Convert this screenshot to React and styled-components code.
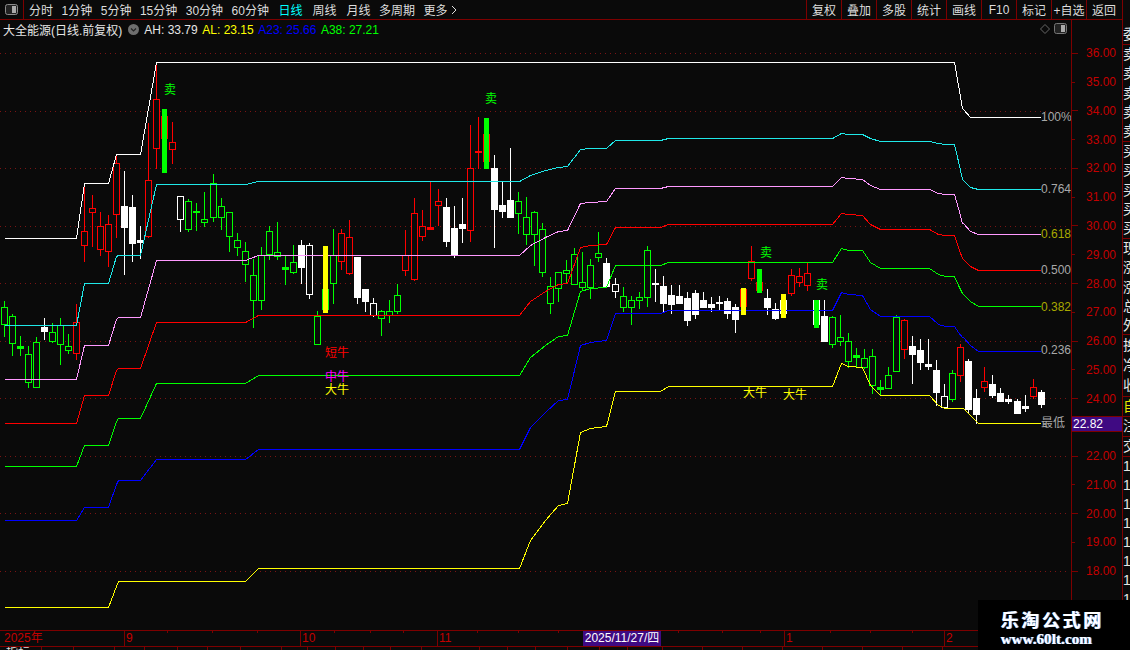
import React from 'react'
import styled, { createGlobalStyle } from 'styled-components'

const LINE = '#7d0000'
const BG = '#0a0a0a'
const FONT = '"Liberation Sans", "Noto Sans CJK SC", sans-serif'

const GlobalStyle = createGlobalStyle`
  html, body { margin: 0; padding: 0; background: ${BG}; }
  body { font-family: ${FONT}; font-size: 12px; }
`

// type, high, body top, body bottom, low. g/r = hollow, w = filled white, h = hollow white
const candles = [
  ['g',301,307,324,336],['g',314,316,343,355],['g',336,346,348,355],['g',346,354,382,387],['g',337,342,387,387],
  ['w',318,327,331,339],['g',323,332,341,342],['g',318,325,344,364],['g',334,346,350,353],['r',304,322,353,359],
  ['r',187,231,245,261],['r',195,208,212,246],['r',212,226,249,255],['r',215,224,251,266],['r',155,163,214,237],
  ['w',171,206,227,274],['w',195,207,243,261],['w',226,240,242,258],['r',123,180,236,237],['r',65,99,148,168],
  ['r',116,116,138,138],['r',122,142,149,163],['h',196,196,219,231],['g',199,201,229,231],['g',203,211,212,230],
  ['g',192,219,222,226],['g',174,183,217,221],['g',198,206,217,229],['g',212,212,236,251],['g',233,240,247,255],
  ['g',242,251,264,281],['g',259,275,300,327],['g',247,255,300,309],['g',226,231,254,259],['g',222,252,256,259],
  ['g',255,267,269,284],['g',245,262,272,273],['w',240,245,267,283],['h',243,245,294,298],['g',311,316,344,344],
  ['g',289,289,309,309],['g',229,255,283,303],['r',229,233,261,269],['r',220,237,273,274],['w',257,257,297,303],
  ['w',289,289,301,311],['h',298,303,315,316],['g',310,311,318,335],['g',300,311,315,322],['g',284,295,311,313],
  ['r',230,255,270,275],['r',198,213,279,280],['r',210,226,236,240],['r',181,227,229,229],['r',189,201,205,225],
  ['w',198,207,241,246],['w',206,228,255,257],['w',198,224,228,242],['r',125,168,230,241],['r',117,151,152,168],
  ['r',134,134,161,161],['w',155,168,209,247],['w',181,205,211,217],['w',148,200,217,217],['g',192,201,213,233],
  ['g',197,217,234,244],['g',211,212,234,265],['g',223,229,272,276],['g',277,286,303,313],['g',272,272,288,301],
  ['g',260,270,273,283],['g',248,254,284,284],['g',252,282,287,289],['g',259,265,287,298],['g',232,253,257,261],
  ['w',258,263,286,287],['h',278,284,291,297],['g',287,296,307,311],['g',296,300,307,324],['g',292,297,300,308],
  ['g',246,250,297,306],['w',269,283,284,301],['w',276,286,303,311],['w',285,295,304,313],['w',285,296,303,303],
  ['w',292,298,320,325],['w',290,293,314,318],['w',292,300,307,307],['w',297,304,307,311],['w',296,302,303,309],
  ['w',298,301,313,318],['w',304,307,319,332],['r',289,289,306,306],['r',246,261,278,280],['r',282,282,290,290],
  ['w',289,298,307,314],['w',303,309,318,319],['w',300,300,313,313],['r',269,275,293,295],['r',268,276,282,286],
  ['r',263,273,285,290],['w',300,300,324,324],['w',300,316,341,341],['g',316,317,344,347],['g',315,337,341,345],
  ['g',333,341,361,367],['g',348,355,357,367],['g',349,358,367,368],['g',349,356,385,393],['g',380,387,389,395],
  ['g',367,375,388,388],['g',315,317,371,371],['r',319,320,349,358],['w',336,346,354,383],['w',339,350,362,369],
  ['w',339,364,366,369],['w',360,370,392,405],['h',384,396,407,407],['g',370,373,399,401],['r',344,347,375,381],
  ['w',359,361,409,413],['w',389,398,414,423],['r',367,381,387,391],['w',375,384,395,397],['w',388,393,401,401],
  ['w',395,399,401,403],['w',399,401,413,413],['w',395,406,408,411],['r',379,387,396,398],['w',390,392,404,407],
]

// signal bars that sit over the candle at index k
const signals = [
  { k: 20, top: 109, bottom: 173, color: '#00ff00' },
  { k: 40, top: 246, bottom: 313, color: '#ffff00' },
  { k: 60, top: 118, bottom: 169, color: '#00ff00' },
  { k: 92, top: 288, bottom: 315, color: '#ffff00' },
  { k: 94, top: 269, bottom: 293, color: '#00ff00' },
  { k: 97, top: 294, bottom: 318, color: '#ffff00' },
  { k: 101, top: 300, bottom: 328, color: '#00ff00' },
]

const high = [[4,238],[76,238],[84,183],[108,183],[116,154],[140,154],[156,62],[954,62],[958,85],[962,108],[970,117],[1040,117]]
const low = [[4,607],[108,607],[118,581],[245,581],[258,568],[519,568],[530,540],[545,520],[558,505],[567,503],[580,432],[590,428],[606,426],[615,391],[660,391],[668,386],[832,386],[841,363],[848,366],[862,367],[870,385],[880,395],[929,395],[938,405],[945,408],[963,408],[978,423],[1040,423]]

const levels = [
  { f: 1, color: '#ffffff' },
  { f: 0.764, color: '#1fe8e8' },
  { f: 0.618, color: '#ff99ff' },
  { f: 0.5, color: '#ff0000' },
  { f: 0.382, color: '#00ff00' },
  { f: 0.236, color: '#0000ff' },
  { f: 0, color: '#ffff00' },
]

const levelLabels = [
  { text: '100%', y: 117, color: '#a8a8a8' },
  { text: '0.764', y: 189, color: '#a8a8a8' },
  { text: '0.618', y: 234, color: '#a8a800' },
  { text: '0.500', y: 270, color: '#a8a8a8' },
  { text: '0.382', y: 307, color: '#a8a800' },
  { text: '0.236', y: 350, color: '#a8a8a8' },
  { text: '最低', y: 423, color: '#a8a8a8' },
]

const marks = [
  { text: '卖', x: 170, y: 90, color: '#00ff00' },
  { text: '卖', x: 491, y: 99, color: '#00ff00' },
  { text: '卖', x: 766, y: 253, color: '#00ff00' },
  { text: '卖', x: 822, y: 285, color: '#00ff00' },
  { text: '短牛', x: 337, y: 353, color: '#ff0000' },
  { text: '中牛', x: 337, y: 377, color: '#ff00ff' },
  { text: '大牛', x: 337, y: 390, color: '#ffff00' },
  { text: '大牛', x: 755, y: 393, color: '#ffff00' },
  { text: '大牛', x: 795, y: 395, color: '#ffff00' },
]

const candleColor = { g: '#00ff00', r: '#ff0000', w: '#ffffff', h: '#ffffff' }
const candleX = (k) => Math.floor(4 + 8.04 * k)

const interp = (pts, x) => {
  for (let i = 1; i < pts.length; i++) {
    if (x <= pts[i][0]) {
      const [x0, y0] = pts[i - 1]
      const [x1, y1] = pts[i]
      return y0 + ((x - x0) / (x1 - x0)) * (y1 - y0)
    }
  }
  return pts[pts.length - 1][1]
}

const xs = [...new Set([...high, ...low].map((p) => p[0]))].sort((a, b) => a - b)
const levelPoints = (f) =>
  xs
    .map((x) => {
      const h = interp(high, x)
      const l = interp(low, x)
      return `${x + 0.5},${Math.round(l + f * (h - l)) + 0.5}`
    })
    .join(' ')

const priceToY = (p) => 53.5 + (36 - p) * 28.78
const grid = [36, 34, 32, 30, 28, 26, 24, 22, 20, 18]
const prices = Array.from({ length: 19 }, (_, i) => 36 - i)

const Page = styled.div`
  display: flex;
  position: relative;
  width: 1130px;
  height: 650px;
  overflow: hidden;
  background: ${BG};
  color: #ddd;
`
const Left = styled.div`
  display: flex;
  flex-direction: column;
  width: 1122px;
`
const Toolbar = styled.div`
  display: flex;
  justify-content: space-between;
  height: 19px;
  border-bottom: 1px solid ${LINE};
  flex-shrink: 0;
`
const Tabs = styled.div`
  display: flex;
  align-items: center;
  gap: 8.5px;
`
const PanelToggle = styled.div`
  display: flex;
  align-items: center;
  justify-content: center;
  width: 23px;
  height: 19px;
  margin-right: -3.5px;
  border-right: 1px solid ${LINE};
`
const Tab = styled.span`
  display: flex;
  align-items: center;
  gap: 3px;
  margin-left: ${(p) => p.$extra || 0}px;
  color: ${(p) => (p.$active ? '#00ffff' : '#ddd')};
  white-space: nowrap;
`
const ToolButtons = styled.div`
  display: flex;
  margin-right: 1px;
`
const ToolButton = styled.div`
  display: flex;
  align-items: center;
  justify-content: center;
  width: 35px;
  border-left: 1px solid ${LINE};
  box-sizing: border-box;
  color: #ddd;
  white-space: nowrap;
`
const Main = styled.div`
  display: flex;
  height: 610px;
  flex-shrink: 0;
`
const ChartPane = styled.div`
  position: relative;
  width: 1071px;
  height: 610px;
  border-right: 1px solid ${LINE};
  flex-shrink: 0;
`
const ChartSvg = styled.svg`
  display: block;
`
const InfoBar = styled.div`
  position: absolute;
  top: 2px;
  left: 3px;
  display: flex;
  align-items: center;
  height: 15px;
  white-space: nowrap;
`
const StockName = styled.span`
  color: #e6e6e6;
  margin-right: 6px;
`
const InfoIcon = styled.svg`
  margin-right: 5px;
`
const Metric = styled.span`
  color: ${(p) => p.$color};
  margin-right: 4.6px;
`
const PaneIcons = styled.div`
  position: absolute;
  top: 3px;
  right: 4px;
  display: flex;
  align-items: center;
  gap: 4px;
`
const Mark = styled.text`
  font-family: ${FONT};
  font-size: 12px;
  text-anchor: ${(p) => p.$anchor || 'middle'};
  dominant-baseline: central;
  fill: ${(p) => p.$color};
`
const PriceAxis = styled.div`
  position: relative;
  flex: 1;
  padding-top: 19px;
  box-sizing: border-box;
  overflow: hidden;
`
const PriceRow = styled.div`
  display: flex;
  align-items: center;
  height: 28.78px;
  color: #c40000;
  font-size: 12px;
`
const PriceTick = styled.i`
  display: block;
  width: ${(p) => (p.$major ? 6 : 3)}px;
  height: 1px;
  margin-right: ${(p) => (p.$major ? 8 : 11)}px;
  background: ${LINE};
`
const PriceTag = styled.div`
  position: absolute;
  left: 0;
  right: 0;
  top: 396px;
  height: 16px;
  padding-left: 1px;
  border-top: 1px solid ${LINE};
  border-bottom: 1px solid ${LINE};
  box-sizing: border-box;
  background: #3f0a82;
  color: #fff;
  font-size: 12px;
  line-height: 14px;
`
const DateAxis = styled.div`
  position: relative;
  display: flex;
  height: 15px;
  border-top: 1px solid ${LINE};
  border-bottom: 1px solid ${LINE};
  flex-shrink: 0;
`
const DateCell = styled.div`
  width: ${(p) => p.$w}px;
  padding-left: ${(p) => (p.$first ? 4 : 1)}px;
  border-left: ${(p) => (p.$first ? 'none' : `1px solid ${LINE}`)};
  box-sizing: border-box;
  color: #c40000;
  line-height: 15px;
  white-space: nowrap;
`
const DateTick = styled.i`
  position: absolute;
  top: 0;
  width: 1px;
  height: 2px;
  background: ${LINE};
`
const DateTag = styled.div`
  position: absolute;
  top: 0;
  left: 583px;
  width: 78px;
  height: 15px;
  background: #3f0a82;
  color: #fff;
  line-height: 15px;
  text-align: center;
  white-space: nowrap;
`
const BottomStrip = styled.div`
  display: flex;
  flex: 1;
  overflow: hidden;
`
const StripCell = styled.div`
  width: ${(p) => p.$w}px;
  border-right: 1px solid ${LINE};
  box-sizing: border-box;
  color: #ddd;
  line-height: 12px;
  padding-left: 6px;
  white-space: nowrap;
  overflow: hidden;
`
const Side = styled.div`
  display: flex;
  flex-direction: column;
  width: 8px;
  border-left: 1px solid ${LINE};
  box-sizing: border-box;
  overflow: hidden;
`
const SideGroup = styled.div`
  height: ${(p) => p.$h}px;
  border-bottom: ${(p) => (p.$plain ? 'none' : `1px solid ${LINE}`)};
  box-sizing: border-box;
  flex-shrink: 0;
`
const SideRow = styled.div`
  height: ${(p) => p.$row || 19.3}px;
  line-height: ${(p) => p.$row || 19.3}px;
  font-size: 14px;
  color: ${(p) => p.$color || '#e6e6e6'};
  white-space: nowrap;
`
const Watermark = styled.div`
  position: absolute;
  right: 0;
  bottom: 0;
  width: 152px;
  height: 50px;
  background: #000;
  text-align: center;
  font-weight: bold;
  color: #fff;
`
const WatermarkTitle = styled.div`
  margin-top: 8px;
  padding-right: 4px;
  height: 22px;
  font-family: "Noto Sans CJK SC", sans-serif;
  font-size: 18px;
  line-height: 22px;
  letter-spacing: 2.6px;
  text-shadow: 1px 0 #7fb4ff;
`
const WatermarkUrl = styled.div`
  margin-top: 1px;
  padding-right: 16px;
  font-family: "Liberation Serif", serif;
  font-size: 15px;
  line-height: 17px;
  letter-spacing: 0.1px;
  text-shadow: 1px 0 #7fb4ff;
`

const Candle = ({ k, data }) => {
  const [type, hi, top, bot, lo] = data
  const x = candleX(k)
  const color = candleColor[type]
  const flat = bot - top <= 2
  const filled = type === 'w' || flat
  return (
    <g>
      <line x1={x + 0.5} x2={x + 0.5} y1={hi} y2={lo + 1} stroke={color} />
      {filled ? (
        <rect x={x - 3} y={top} width={7} height={bot - top + 1} fill={color} />
      ) : (
        <rect x={x - 2.5} y={top + 0.5} width={6} height={bot - top} fill={BG} stroke={color} />
      )}
    </g>
  )
}

const Chart = () => (
  <ChartSvg width="1071" height="610" viewBox="0 20 1071 610" shapeRendering="crispEdges">
    {grid.map((p) => (
      <line
        key={p}
        x1="0"
        x2="1068"
        y1={Math.floor(priceToY(p)) + 0.5}
        y2={Math.floor(priceToY(p)) + 0.5}
        stroke="#7a1414"
        strokeDasharray="1 4"
      />
    ))}
    {candles.map((c, k) => (
      <Candle key={k} k={k} data={c} />
    ))}
    {levels.map((l) => (
      <polyline key={l.f} points={levelPoints(l.f)} fill="none" stroke={l.color} />
    ))}
    {signals.map((s) => (
      <rect key={s.k} x={candleX(s.k) - 2} y={s.top} width={5} height={s.bottom - s.top} fill={s.color} />
    ))}
    {marks.map((m, i) => (
      <Mark key={i} x={m.x} y={m.y} $color={m.color}>
        {m.text}
      </Mark>
    ))}
    {levelLabels.map((l) => (
      <Mark key={l.text} x={1041} y={l.y} $color={l.color} $anchor="start">
        {l.text}
      </Mark>
    ))}
  </ChartSvg>
)

const ToggleIcon = ({ stroke = '#8c8c8c' }) => (
  <svg width="13" height="11" viewBox="0 0 13 11">
    <rect x="0.5" y="0.5" width="12" height="10" rx="2" fill="#222" stroke={stroke} />
    <rect x="7" y="2" width="4" height="7" fill="#aaa" />
  </svg>
)

const tabs = [
  { label: '分时' },
  { label: '1分钟' },
  { label: '5分钟' },
  { label: '15分钟' },
  { label: '30分钟' },
  { label: '60分钟' },
  { label: '日线', extra: 1, active: true },
  { label: '周线', extra: 1.5 },
  { label: '月线', extra: 1.5 },
  { label: '多周期' },
]
const tools = ['复权', '叠加', '多股', '统计', '画线', 'F10', '标记', '+自选', '返回']
const months = [
  { label: '2025年', w: 124, first: true },
  { label: '9', w: 176 },
  { label: '10', w: 137 },
  { label: '11', w: 347 },
  { label: '1', w: 160 },
  { label: '2', w: 178 },
]
const dateTicks = [167, 212, 257, 334, 370, 403, 477, 518, 558, 678, 722, 760, 830, 870, 912, 985, 1030]
const strip = [42, 32, 41, 30, 33, 30, 33, 41, 26, 28, 28, 27, 31, 58, 28, 28, 32, 32, 28, 35, 40, 40, 40, 40, 40, 40, 40, 40]
const sideGroups = [
  { h: 25, plain: true, rows: [] },
  { h: 20, rows: ['委'] },
  { h: 97, rows: ['卖', '卖', '卖', '卖', '卖'] },
  { h: 97, rows: ['买', '买', '买', '买', '买'] },
  { h: 96, rows: ['现', '涨', '涨', '总', '外'] },
  { h: 62, rows: ['换', '净', '收'], row: 20 },
  { h: 20, rows: ['自'], color: '#e6e600' },
  { h: 20, rows: ['注'] },
  { h: 20, rows: ['交'] },
  { h: 193, plain: true, row: 19, rows: Array(10).fill('1') },
]

export default function App() {
  return (
    <Page>
      <GlobalStyle />
      <Left>
        <Toolbar>
          <Tabs>
            <PanelToggle>
              <ToggleIcon />
            </PanelToggle>
            {tabs.map((t) => (
              <Tab key={t.label} $active={t.active} $extra={t.extra}>
                {t.label}
              </Tab>
            ))}
            <Tab>
              更多
              <svg width="6" height="10" viewBox="0 0 6 10">
                <path d="M1 1l4 4-4 4" fill="none" stroke="#ddd" />
              </svg>
            </Tab>
          </Tabs>
          <ToolButtons>
            {tools.map((t) => (
              <ToolButton key={t}>{t}</ToolButton>
            ))}
          </ToolButtons>
        </Toolbar>
        <Main>
          <ChartPane>
            <Chart />
            <InfoBar>
              <StockName>大全能源(日线.前复权)</StockName>
              <InfoIcon width="11" height="11" viewBox="0 0 11 11">
                <circle cx="5.5" cy="5.5" r="5.5" fill="#6e6e6e" />
                <path d="M3 4.5l2.5 2.5 2.5-2.5" fill="none" stroke="#222" strokeWidth="1.2" />
              </InfoIcon>
              <Metric $color="#e6e6e6">AH: 33.79</Metric>
              <Metric $color="#ffff00">AL: 23.15</Metric>
              <Metric $color="#0000ff">A23: 25.66</Metric>
              <Metric $color="#00ff00">A38: 27.21</Metric>
            </InfoBar>
            <PaneIcons>
              <svg width="10" height="10" viewBox="0 0 10 10">
                <path d="M5 .5L9.5 5 5 9.5.5 5z" fill="none" stroke="#666" />
              </svg>
              <ToggleIcon stroke="#777" />
            </PaneIcons>
          </ChartPane>
          <PriceAxis>
            {prices.map((p) => (
              <PriceRow key={p}>
                <PriceTick $major={p % 2 === 0} />
                {p !== 23 && p.toFixed(2)}
              </PriceRow>
            ))}
            <PriceTag>22.82</PriceTag>
          </PriceAxis>
        </Main>
        <DateAxis>
          {months.map((m) => (
            <DateCell key={m.label} $w={m.w} $first={m.first}>
              {m.label}
            </DateCell>
          ))}
          {dateTicks.map((x) => (
            <DateTick key={x} style={{ left: x }} />
          ))}
          <DateTag>2025/11/27/四</DateTag>
        </DateAxis>
        <BottomStrip>
          {strip.map((w, i) => (
            <StripCell key={i} $w={w}>
              {i === 0 ? '指标' : ''}
            </StripCell>
          ))}
        </BottomStrip>
      </Left>
      <Side>
        {sideGroups.map((g, i) => (
          <SideGroup key={i} $h={g.h} $plain={g.plain}>
            {g.rows.map((r, j) => (
              <SideRow key={j} $row={g.row} $color={g.color}>
                {r}
              </SideRow>
            ))}
          </SideGroup>
        ))}
      </Side>
      <Watermark>
        <WatermarkTitle>乐淘公式网</WatermarkTitle>
        <WatermarkUrl>www.60lt.com</WatermarkUrl>
      </Watermark>
    </Page>
  )
}
